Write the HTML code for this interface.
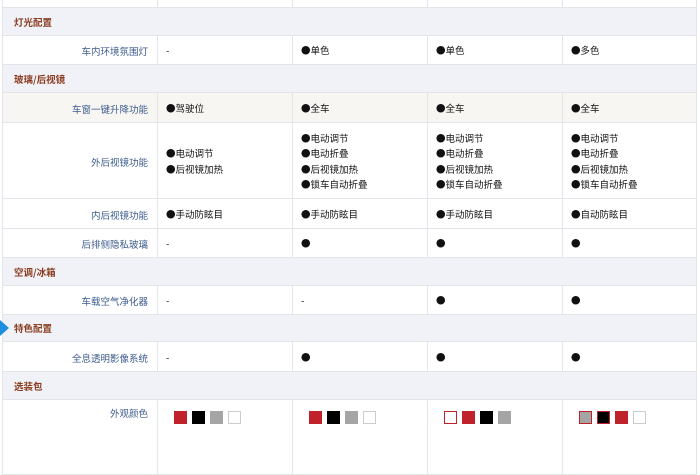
<!DOCTYPE html>
<html><head><meta charset="utf-8"><style>
*{margin:0;padding:0;box-sizing:border-box}
body{width:700px;height:469px;overflow:hidden;background:#fff;font-family:"Noto Sans CJK SC","Liberation Sans",sans-serif;font-size:9.5px;color:#111;position:relative}
.r{position:absolute;left:2px;width:695px;border-bottom:1px solid #e3e5ea;border-left:1px solid #e3e5ea;border-right:1px solid #e3e5ea}
.sec{background:#f0f2f7;color:#8a3b1e;font-weight:bold;padding-left:11px;display:flex;align-items:center}
.c{position:absolute;top:0;bottom:0;border-left:1px solid #e3e5ea;padding-left:8px;display:flex;flex-direction:column;justify-content:center;line-height:15.5px;padding-top:2px}
.l{position:absolute;left:0;width:154px;top:0;bottom:0;text-align:right;padding-right:9px;color:#3c5b8c;display:flex;align-items:center;justify-content:flex-end;padding-top:2px}
.c1{left:154px;width:135px}.c2{left:289px;width:135px}.c3{left:424px;width:135px}.c4{left:559px;width:136px}
.sw{display:inline-block;width:13px;height:13px;margin-right:5px;vertical-align:top}
</style></head><body>
<div class="r" style="top:0;height:8px"><div class="c c1"></div><div class="c c2"></div><div class="c c3"></div><div class="c c4"></div></div>
<div class="r sec" style="top:8px;height:28px">灯光配置</div>
<div class="r" style="top:36px;height:29px"><div class="l">车内环境氛围灯</div><div class="c c1">-</div><div class="c c2">●单色</div><div class="c c3">●单色</div><div class="c c4">●多色</div></div>
<div class="r sec" style="top:65px;height:28px">玻璃/后视镜</div>
<div class="r" style="top:93px;height:30px;background:#f8f6f2"><div class="l">车窗一键升降功能</div><div class="c c1">●驾驶位</div><div class="c c2">●全车</div><div class="c c3">●全车</div><div class="c c4">●全车</div></div>
<div class="r" style="top:123px;height:76px"><div class="l">外后视镜功能</div><div class="c c1">●电动调节<br>●后视镜加热</div><div class="c c2">●电动调节<br>●电动折叠<br>●后视镜加热<br>●锁车自动折叠</div><div class="c c3">●电动调节<br>●电动折叠<br>●后视镜加热<br>●锁车自动折叠</div><div class="c c4">●电动调节<br>●电动折叠<br>●后视镜加热<br>●锁车自动折叠</div></div>
<div class="r" style="top:199px;height:30px"><div class="l">内后视镜功能</div><div class="c c1">●手动防眩目</div><div class="c c2">●手动防眩目</div><div class="c c3">●手动防眩目</div><div class="c c4">●自动防眩目</div></div>
<div class="r" style="top:229px;height:29px"><div class="l">后排侧隐私玻璃</div><div class="c c1">-</div><div class="c c2">●</div><div class="c c3">●</div><div class="c c4">●</div></div>
<div class="r sec" style="top:258px;height:28px">空调/冰箱</div>
<div class="r" style="top:286px;height:29px"><div class="l">车载空气净化器</div><div class="c c1">-</div><div class="c c2">-</div><div class="c c3">●</div><div class="c c4">●</div></div>
<div class="r sec" style="top:315px;height:27px">特色配置</div>
<div style="position:absolute;left:0;top:320px;width:0;height:0;border-top:8px solid transparent;border-bottom:8px solid transparent;border-left:9px solid #1e8fe0"></div>
<div class="r" style="top:342px;height:30px"><div class="l">全息透明影像系统</div><div class="c c1">-</div><div class="c c2">●</div><div class="c c3">●</div><div class="c c4">●</div></div>
<div class="r sec" style="top:372px;height:28px">选装包</div>
<div class="r" style="top:400px;height:75px"><div class="l" style="align-items:flex-start;padding-top:6px">外观颜色</div>
<div class="c c1" style="justify-content:flex-start;padding-top:11px;padding-left:16px;flex-direction:row"><span class="sw" style="background:#c0222b"></span><span class="sw" style="background:#000"></span><span class="sw" style="background:#a5a5a5"></span><span class="sw" style="border:1px solid #ccc"></span></div>
<div class="c c2" style="justify-content:flex-start;padding-top:11px;padding-left:16px;flex-direction:row"><span class="sw" style="background:#c0222b"></span><span class="sw" style="background:#000"></span><span class="sw" style="background:#a5a5a5"></span><span class="sw" style="border:1px solid #ccc"></span></div>
<div class="c c3" style="justify-content:flex-start;padding-top:11px;padding-left:16px;flex-direction:row"><span class="sw" style="border:1px solid #c0222b"></span><span class="sw" style="background:#c0222b"></span><span class="sw" style="background:#000"></span><span class="sw" style="background:#a5a5a5"></span></div>
<div class="c c4" style="justify-content:flex-start;padding-top:11px;padding-left:16px;flex-direction:row"><span class="sw" style="background:#a5a5a5;border:1px solid #c0222b"></span><span class="sw" style="background:#000;border:1px solid #c0222b"></span><span class="sw" style="background:#c0222b"></span><span class="sw" style="border:1px solid #ccc"></span></div>
</div>
</body></html>
